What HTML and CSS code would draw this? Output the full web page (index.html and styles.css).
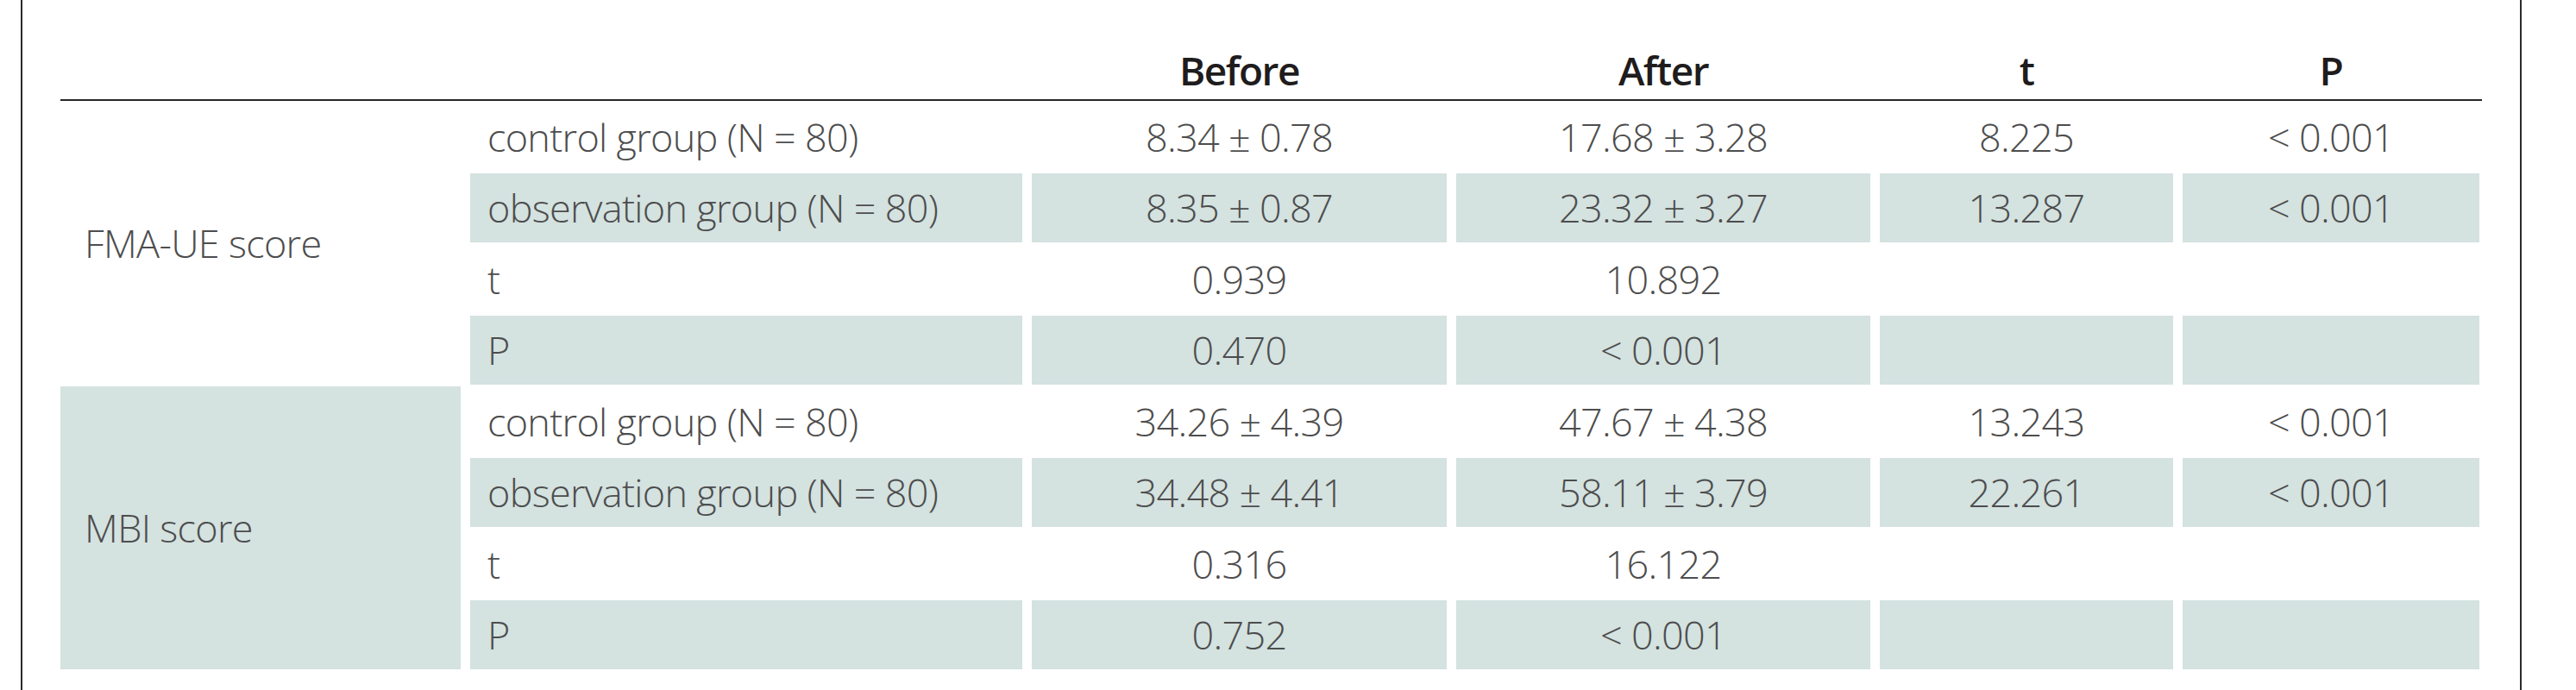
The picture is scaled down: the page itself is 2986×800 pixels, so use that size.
FILE: index.html
```html
<!DOCTYPE html>
<html lang="en">
<head>
<meta charset="utf-8">
<title>Table</title>
<link rel="stylesheet" href="styles.css">
</head>
<body>
<div class="frame">
  <div class="sheet">
    <div class="head">
      <div class="hc"></div>
      <div class="hc"></div>
      <div class="hc">Before</div>
      <div class="hc">After</div>
      <div class="hc">t</div>
      <div class="hc">P</div>
    </div>
    <div class="rule"></div>
    <div class="grid">
      <div class="grp g1">FMA-UE score</div>
      <div class="grp g2 shade">MBI score</div>

      <div class="lab">control group (N = 80)</div>
      <div class="val">8.34 ± 0.78</div>
      <div class="val">17.68 ± 3.28</div>
      <div class="val">8.225</div>
      <div class="val">&lt; 0.001</div>

      <div class="lab shade">observation group (N = 80)</div>
      <div class="val shade">8.35 ± 0.87</div>
      <div class="val shade">23.32 ± 3.27</div>
      <div class="val shade">13.287</div>
      <div class="val shade">&lt; 0.001</div>

      <div class="lab">t</div>
      <div class="val">0.939</div>
      <div class="val">10.892</div>
      <div class="val"></div>
      <div class="val"></div>

      <div class="lab shade">P</div>
      <div class="val shade">0.470</div>
      <div class="val shade">&lt; 0.001</div>
      <div class="val shade"></div>
      <div class="val shade"></div>

      <div class="lab">control group (N = 80)</div>
      <div class="val">34.26 ± 4.39</div>
      <div class="val">47.67 ± 4.38</div>
      <div class="val">13.243</div>
      <div class="val">&lt; 0.001</div>

      <div class="lab shade">observation group (N = 80)</div>
      <div class="val shade">34.48 ± 4.41</div>
      <div class="val shade">58.11 ± 3.79</div>
      <div class="val shade">22.261</div>
      <div class="val shade">&lt; 0.001</div>

      <div class="lab">t</div>
      <div class="val">0.316</div>
      <div class="val">16.122</div>
      <div class="val"></div>
      <div class="val"></div>

      <div class="lab shade">P</div>
      <div class="val shade">0.752</div>
      <div class="val shade">&lt; 0.001</div>
      <div class="val shade"></div>
      <div class="val shade"></div>
    </div>
  </div>
</div>
</body>
</html>
```

FILE: styles.css
```css
html, body {
  margin: 0;
  padding: 0;
  background: #ffffff;
}

body {
  font-family: "Open Sans", "Noto Sans", "Liberation Sans", sans-serif;
  color: #4d4d4d;
}

.frame {
  box-sizing: border-box;
  margin-left: 24px;
  width: 2899px;
  height: 800px;
  border-left: 2px solid #2b2b2b;
  border-right: 2px solid #2b2b2b;
  padding-left: 44px;
}

.sheet {
  width: 2807px;
}

.head,
.grid {
  display: grid;
  grid-template-columns: 464px 640px 481px 480px 340px 344px;
  column-gap: 11px;
}

.head {
  height: 115px;
  align-items: end;
}

.hc {
  text-align: center;
  font-size: 46px;
  font-weight: 600;
  letter-spacing: -1.5px;
  line-height: 1;
  padding-bottom: 11px;
  color: #1f1c1d;
}

.rule {
  height: 2px;
  background: #262626;
}

.grid {
  margin-top: 1px;
  grid-auto-rows: 80px;
  row-gap: 2.5px;
}

.grp,
.lab,
.val {
  display: flex;
  align-items: center;
  font-size: 45px;
  font-weight: 300;
  letter-spacing: -0.7px;
  line-height: 1;
}

.grp {
  grid-column: 1;
  padding-left: 28px;
}

.g1 {
  grid-row: 1 / span 4;
}

.g2 {
  grid-row: 5 / span 4;
}

.lab {
  padding-left: 20px;
}

.val {
  justify-content: center;
}

.shade {
  background: #d4e2e0;
}
```
